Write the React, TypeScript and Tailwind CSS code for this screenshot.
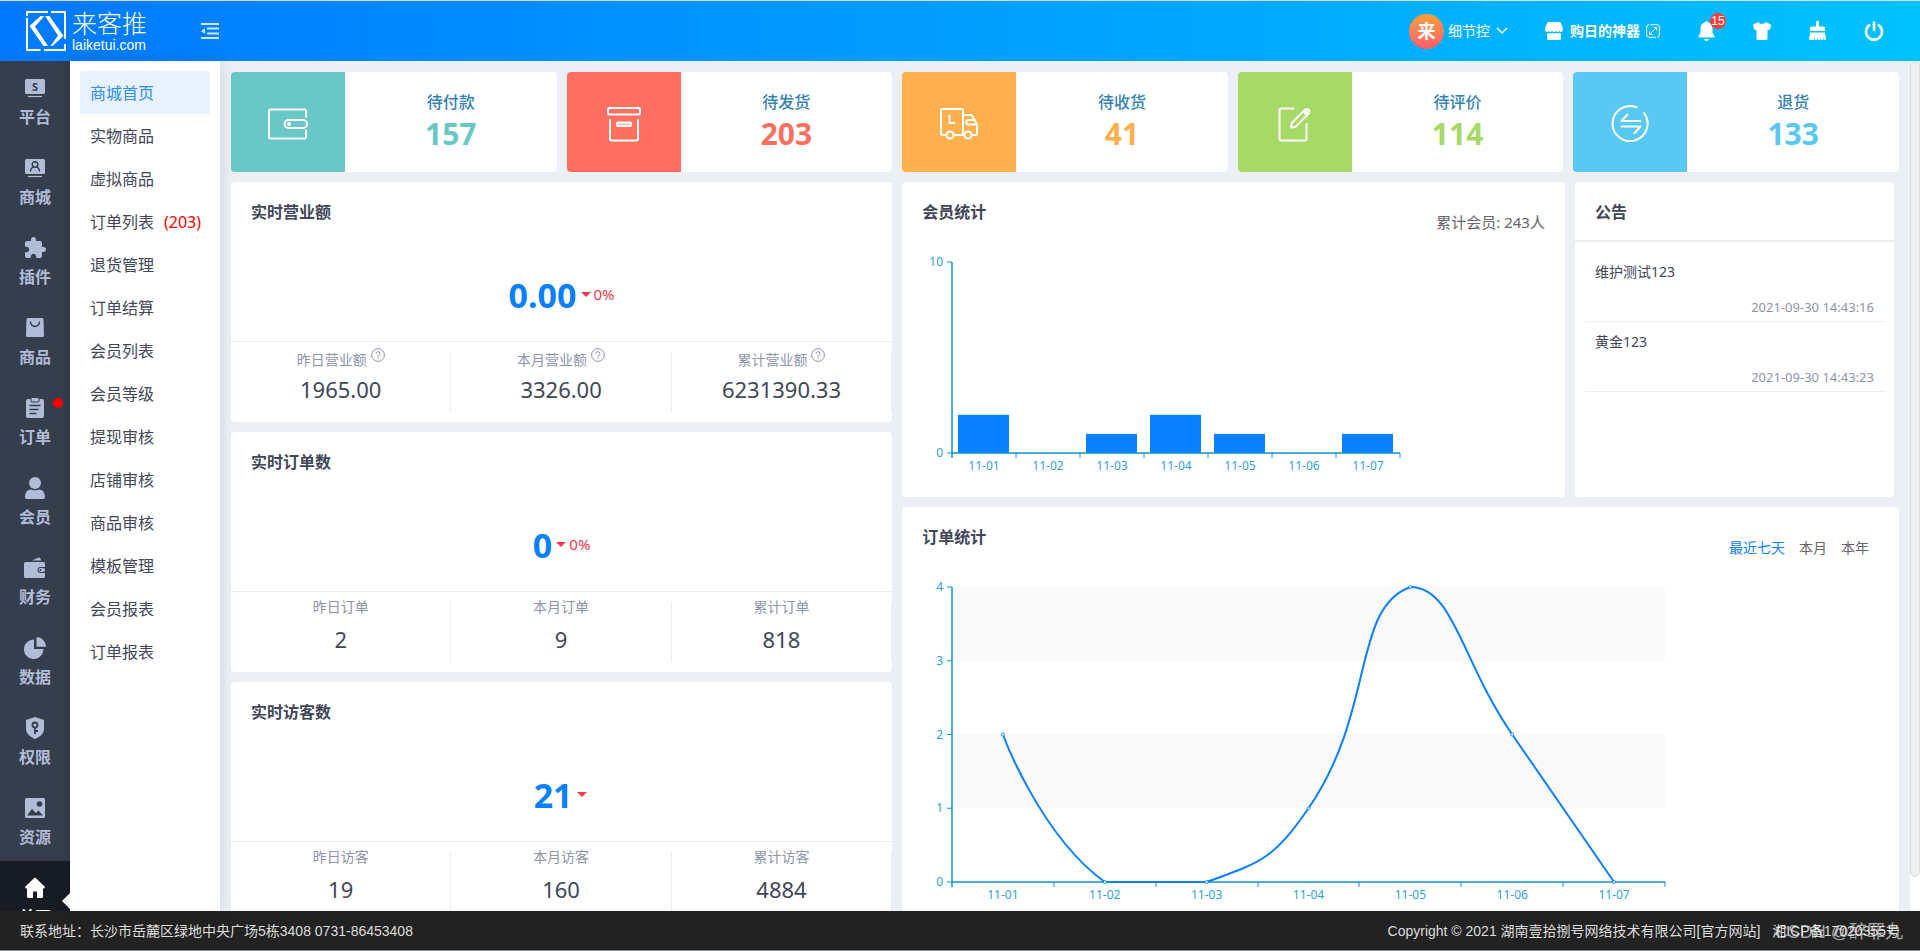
import type { ReactNode } from "react";
import { MdExtension } from "react-icons/md";

const DAYS = ["11-01", "11-02", "11-03", "11-04", "11-05", "11-06", "11-07"];
const MEMBER_COUNTS = [2, 0, 1, 2, 1, 0, 1];
const ORDER_COUNTS = [2, 0, 0, 1, 4, 2, 0];

const RAIL_BG = "#353e4c";

interface RailItem {
  label: string;
  icon: ReactNode;
  dot?: boolean;
  active?: boolean;
}

const railItems: RailItem[] = [
  {
    label: "平台",
    icon: (
      <>
        <rect x="1" y="2" width="20" height="15" rx="1.5" />
        <path d="M4 19.5h14" stroke="currentColor" strokeWidth="1.2" />
        <text x="11" y="13.5" fontSize="11" fontWeight="700" textAnchor="middle" fill={RAIL_BG}>
          S
        </text>
      </>
    ),
  },
  {
    label: "商城",
    icon: (
      <>
        <rect x="1" y="2" width="20" height="15" rx="1.5" />
        <path d="M4 19.5h14" stroke="currentColor" strokeWidth="1.2" />
        <g fill="none" stroke={RAIL_BG} strokeWidth="1.4">
          <circle cx="11" cy="7.5" r="2.8" />
          <path d="M6.5 14.5c.2-2.6 1.6-4.2 3.2-4.6M15.5 14.5c-.2-2.6-1.6-4.2-3.2-4.6" />
        </g>
      </>
    ),
  },
  { label: "插件", icon: null },
  {
    label: "商品",
    icon: (
      <>
        <path d="M4 1h14a1.5 1.5 0 0 1 1.5 1.5L20 18.5a1.5 1.5 0 0 1-1.5 1.5h-15A1.5 1.5 0 0 1 2 18.5L2.5 2.5A1.5 1.5 0 0 1 4 1z" />
        <path d="M6.5 4.5c0 6.5 9 6.5 9 0" fill="none" stroke={RAIL_BG} strokeWidth="1.5" />
      </>
    ),
  },
  {
    label: "订单",
    dot: true,
    icon: (
      <>
        <rect x="2" y="2" width="18" height="19" rx="2" />
        <rect x="7" y="0.5" width="8" height="4.5" rx="1" stroke={RAIL_BG} strokeWidth="1" />
        <path d="M5.5 8.5h11M5.5 12.5h9M5.5 16.5h7" stroke={RAIL_BG} strokeWidth="1.3" />
      </>
    ),
  },
  {
    label: "会员",
    icon: (
      <>
        <circle cx="11" cy="6" r="6" />
        <path d="M1 20c0-4.5 2.5-7.5 6-7.5 1.5 1 6.5 1 8 0 3.5 0 6 3 6 7.5 0 1.3-.7 2-2 2H3c-1.3 0-2-.7-2-2z" />
      </>
    ),
  },
  {
    label: "财务",
    icon: (
      <>
        <path d="M8 3.500l6-2.7c1.2-.5 2 0 2.5 1l.7 1.7z" />
        <path d="M1.5 5H19.5A1.5 1.5 0 0 1 21 6.5V10H16.5a3 3 0 0 0 0 6H21v3.500a1.5 1.5 0 0 1-1.5 1.5h-18A1.5 1.5 0 0 1 0 19.5v-13A1.5 1.5 0 0 1 1.5 5z" />
        <rect x="14.5" y="11" width="6.5" height="4" rx="2" />
        <circle cx="16.5" cy="13" r="1" fill={RAIL_BG} />
      </>
    ),
  },
  {
    label: "数据",
    icon: (
      <>
        <path d="M10 2.5V12h9.5A9.8 9.8 0 1 1 10 2.5z" />
        <path d="M12.5 0A9.6 9.6 0 0 1 22 9.7h-9.5z" />
      </>
    ),
  },
  {
    label: "权限",
    icon: (
      <>
        <path d="M11 0l9 3v9c0 5-4.5 8-9 10-4.5-2-9-5-9-10V3z" />
        <g fill="none" stroke={RAIL_BG} strokeWidth="1.8">
          <circle cx="11" cy="8" r="2.5" />
          <path d="M11 10.5V17M11 14h3" />
        </g>
      </>
    ),
  },
  {
    label: "资源",
    icon: (
      <>
        <rect x="1" y="1" width="20" height="20" rx="1.5" />
        <circle cx="15.5" cy="7" r="2.8" fill={RAIL_BG} />
        <path d="M3 18.5l5-6.5 4 4 2.5-2.5 4.5 5z" fill={RAIL_BG} />
      </>
    ),
  },
  {
    label: "首页",
    active: true,
    icon: (
      <path d="M11 .8c.5 0 .9.2 1.3.6l8 7.8c1 1 .6 2.3-.8 2.3H19V19.5a1.5 1.5 0 0 1-1.5 1.5H13V14.5H9V21H4.5A1.5 1.5 0 0 1 3 19.5v-8h-.5c-1.4 0-1.8-1.3-.8-2.3l8-7.8c.4-.4.8-.6 1.3-.6z" />
    ),
  },
];

const menuItems = [
  "商城首页",
  "实物商品",
  "虚拟商品",
  "订单列表",
  "退货管理",
  "订单结算",
  "会员列表",
  "会员等级",
  "提现审核",
  "店铺审核",
  "商品审核",
  "模板管理",
  "会员报表",
  "订单报表",
];

const statCards = [
  {
    label: "待付款",
    value: "157",
    bg: "bg-[#69c8c7]",
    text: "text-[#69c8c7]",
    icon: (
      <>
        <path d="M38 15V9a1.5 1.5 0 0 0-1.5-1.5H2.500A1.5 1.5 0 0 0 1 9v26a1.5 1.5 0 0 0 1.5 1.5h34A1.5 1.5 0 0 0 38 35v-6.5" />
        <rect x="16.5" y="18" width="22.5" height="8" rx="4" />
        <circle cx="21" cy="22" r="1" />
      </>
    ),
  },
  {
    label: "待发货",
    value: "203",
    bg: "bg-[#ff6f61]",
    text: "text-[#ff6f61]",
    icon: (
      <>
        <rect x="4" y="6" width="32" height="6.5" rx="1.5" />
        <path d="M6 18v19a1.5 1.5 0 0 0 1.5 1.5h25A1.5 1.5 0 0 0 34 37V18" />
        <rect x="13" y="20.5" width="14" height="3.5" rx="1" fill="#fff" fillOpacity="0.5" />
      </>
    ),
  },
  {
    label: "待收货",
    value: "41",
    bg: "bg-[#ffb04e]",
    text: "text-[#ffb04e]",
    icon: (
      <>
        <path d="M6.5 33H3.5A1.5 1.5 0 0 1 2 31.5V8.5A1.5 1.5 0 0 1 3.5 7h19A1.5 1.5 0 0 1 24 8.5V33M15 33h9.500M24 13h7.5a2 2 0 0 1 1.8 1.1L38 22.5v9a1.5 1.5 0 0 1-1.5 1.5H33" />
        <circle cx="11" cy="33" r="3.5" />
        <circle cx="29" cy="33" r="3.5" />
        <path d="M10.5 13.5v7.5h5M36 18h-6.5a2 2 0 0 0 0 4.5H38" />
      </>
    ),
  },
  {
    label: "待评价",
    value: "114",
    bg: "bg-[#a6d966]",
    text: "text-[#a6d966]",
    icon: (
      <>
        <path d="M18.5 6.5H6A1.5 1.5 0 0 0 4.5 8v29A1.5 1.5 0 0 0 6 38.5h24a1.5 1.5 0 0 0 1.5-1.5V22" />
        <path d="M16 25.5l.8-4.5L30 7.800a2.600 2.600 0 0 1 3.700 3.700L20.500 24.700z" />
        <circle cx="31" cy="10.5" r="1.2" />
      </>
    ),
  },
  {
    label: "退货",
    value: "133",
    bg: "bg-[#59c8f3]",
    text: "text-[#59c8f3]",
    icon: (
      <>
        <path d="M26.5 5.3A17.5 17.5 0 1 0 34 11" />
        <path d="M17.5 12.5l-6 6.5H30.500M11.5 24.5H30.500l-6 6.5" />
      </>
    ),
  },
];

const realtimePanels = [
  {
    title: "实时营业额",
    value: "0.00",
    change: "0%",
    help: true,
    items: [
      ["昨日营业额", "1965.00"],
      ["本月营业额", "3326.00"],
      ["累计营业额", "6231390.33"],
    ],
  },
  {
    title: "实时订单数",
    value: "0",
    change: "0%",
    help: false,
    items: [
      ["昨日订单", "2"],
      ["本月订单", "9"],
      ["累计订单", "818"],
    ],
  },
  {
    title: "实时访客数",
    value: "21",
    change: "",
    help: false,
    items: [
      ["昨日访客", "19"],
      ["本月访客", "160"],
      ["累计访客", "4884"],
    ],
  },
];

const notices = [
  { title: "维护测试123", time: "2021-09-30 14:43:16" },
  { title: "黄金123", time: "2021-09-30 14:43:23" },
];

function Header() {
  return (
    <header className="flex h-[61px] shrink-0 items-center border-t border-[#cfdbe6] bg-linear-to-r from-[#0078ff] to-[#00c2ff] text-white">
      <a href="#home" className="ml-[26px] flex items-center gap-[6px]">
        <svg width="40" height="40" viewBox="0 0 40 40" fill="none" stroke="#fff" strokeWidth="2">
          <path d="M1 5V1h21M25 1h14v27M39 33v6H18M14.5 39H1V7" />
          <path d="M14.5 5h4L9 15.5 22 35h-4.5L3.5 15z" fill="#fff" stroke="none" />
          <path d="M19 5h4.5L37.5 25 26.5 35h-2L32 24.5z" fill="#fff" stroke="none" />
        </svg>
        <span className="flex flex-col">
          <span className="text-[25px] leading-7 font-light">来客推</span>
          <span className="font-['Liberation_Sans',sans-serif] text-sm leading-4">laiketui.com</span>
        </span>
      </a>
      <button type="button" aria-label="收起菜单" className="ml-[54px]">
        <svg width="18" height="16" viewBox="0 0 18 16" stroke="#fff" strokeOpacity="0.8" strokeWidth="2">
          <path d="M0 1h18M6 5.5h12M6 10.5h12M0 15h18" />
          <path d="M4 5L0 8l4 3z" fill="#fff" fillOpacity="0.8" stroke="none" />
        </svg>
      </button>

      <div className="ml-auto flex items-center pr-9">
        <button type="button" className="flex items-center text-sm">
          <span className="flex size-[35px] items-center justify-center rounded-full bg-linear-to-b from-[#f8a035] to-[#fb5a6a] text-lg font-bold">
            来
          </span>
          <span className="ml-1">细节控</span>
          <svg className="ml-[6px]" width="12" height="8" viewBox="0 0 12 8" fill="none" stroke="#fff" strokeWidth="1.5">
            <path d="M1 1l5 5 5-5" />
          </svg>
        </button>
        <a href="#shop" className="ml-[37px] flex items-center text-sm font-bold">
          <svg width="18" height="18" viewBox="0 0 18 18" fill="#fff">
            <path d="M3.5 0h11a1.5 1.5 0 0 1 1.4 1L18 6.5v1c0 2.5-2.5 3-3.5 1.5-1 1.5-2.7 1.5-3.5 0-1 1.5-3 1.5-4 0-.8 1.5-2.5 1.5-3.5 0C2.5 10.5 0 10 0 7.500v-1L2.100 1A1.5 1.5 0 0 1 3.5 0z" />
            <path d="M2 11.5c1 0 1.5-.3 2-.7 1 .9 2.5.9 3.2 0 1 .9 2.8.9 3.6 0 .9.9 2.4.9 3.200 0 .5.4 1 .7 2 .7v5a1.5 1.5 0 0 1-1.5 1.5h-11A1.5 1.5 0 0 1 2 16.500z" />
          </svg>
          <span className="ml-[7px]">购日的神器</span>
          <svg className="ml-[6px]" width="14" height="14" viewBox="0 0 14 14" fill="none" stroke="#fff">
            <path d="M11 13.3a2.5 2.5 0 0 0 2.3-2.3V3A2.3 2.3 0 0 0 11 .7H4.500M3.5.7A2.5 2.5 0 0 0 .7 3v8A2.3 2.3 0 0 0 3 13.300h7" />
            <path d="M7.5 3.5h3v3M10.5 3.5l-7 7M3.5 7.5v3h3" />
          </svg>
        </a>
        <button type="button" aria-label="消息" className="relative ml-[38px]">
          <svg width="17" height="20" viewBox="0 0 17 20" fill="#fff">
            <path d="M8.5 0c.8 0 1.3.5 1.3 1.3 3 .7 4.7 3 4.7 6.2v4.500l2 3c.4.7.2 1.5-.8 1.5H1.300c-1 0-1.200-.8-.8-1.500l2-3V7.500c0-3.200 1.700-5.500 4.700-6.200C7.200.5 7.700 0 8.500 0zM6 18h5c-.4 1.300-1.300 2-2.500 2S6.400 19.300 6 18z" />
          </svg>
          <span className="absolute -top-2 left-3 flex size-4 items-center justify-center rounded-full bg-[#ff3b3b] font-['Liberation_Sans',sans-serif] text-[12px] leading-none">
            15
          </span>
        </button>
        <button type="button" aria-label="装扮" className="ml-[38px]">
          <svg width="18" height="18" viewBox="0 0 18 18" fill="#fff">
            <path d="M5.5 0c1 2.6 6 2.6 7 0L17 2c.9.4 1.100 1.200.8 2L17 7c-.2.8-.8 1-1.500.8L14.500 7.500V16.500a1.500 1.500 0 0 1-1.500 1.500H5a1.500 1.500 0 0 1-1.500-1.500V7.500L2.500 7.800C1.800 8 1.200 7.800 1 7L.2 4C-.1 3.200.1 2.400 1 2z" />
          </svg>
        </button>
        <button type="button" aria-label="清除缓存" className="ml-[38px]">
          <svg width="17" height="20" viewBox="0 0 17 20" fill="#fff">
            <path d="M7 0h3v5.5h4.500A1.5 1.5 0 0 1 16 7v3H1V7a1.500 1.500 0 0 1 1.500-1.500H7zM1 11.500h15l1 7.500h-2.500l.5-3-1.500 3H11.500l.5-3-1.500 3H8.500L9 16l-1.500 3H5.500L6 16l-1.500 3H0z" />
          </svg>
        </button>
        <button type="button" aria-label="退出" className="ml-[38px]">
          <svg width="20" height="20" viewBox="0 0 20 20" fill="none" stroke="#fff" strokeWidth="2.6" strokeLinecap="round">
            <path d="M10 1.5v7.5M5.300 4.200a8 8 0 1 0 9.400 0" />
          </svg>
        </button>
      </div>
    </header>
  );
}

function Rail() {
  return (
    <nav className="w-[70px] shrink-0 overflow-hidden bg-[#353e4c]">
      {railItems.map((item) => (
        <a
          key={item.label}
          href="#"
          className={`relative flex h-20 flex-col items-center pt-4 text-base leading-6 font-bold ${
            item.active ? "bg-[#171c24] text-white" : "text-[#b1bcd6]"
          }`}
        >
          {item.icon ? (
            <svg width="22" height="22" viewBox="0 0 22 22" fill="currentColor">
              {item.icon}
            </svg>
          ) : (
            <MdExtension size={24} className="-my-px" />
          )}
          <span className="mt-[6px]">{item.label}</span>
          {item.dot && <span className="absolute top-[17px] right-[7px] size-[10px] rounded-full bg-[#ff0000]" />}
          {item.active && (
            <span className="absolute top-8 right-0 border-y-8 border-r-8 border-y-transparent border-r-white" />
          )}
        </a>
      ))}
    </nav>
  );
}

function SubMenu() {
  return (
    <nav className="z-10 w-[150px] shrink-0 bg-white px-[10px] pt-[10px] shadow-[0_0_16px_rgba(0,0,0,0.12)]">
      {menuItems.map((label, i) => (
        <a
          key={label}
          href="#"
          className={`flex h-[43px] items-center rounded-xs px-[10px] text-base whitespace-nowrap ${
            i === 0 ? "bg-[#e9f3ff] text-[#2d8cff]" : "text-[#414658]"
          }`}
        >
          {label}
          {label === "订单列表" && <span className="ml-[10px] text-[#ff0000]">(203)</span>}
        </a>
      ))}
    </nav>
  );
}

function RealtimePanel({ title, value, change, help, items }: (typeof realtimePanels)[number]) {
  return (
    <section className="flex h-60 flex-col rounded-sm bg-white text-[#414658]">
      <h2 className="px-5 pt-[18px] text-base leading-6 font-bold">{title}</h2>
      <div className="flex flex-1 items-center justify-center pt-7 pb-1">
        <span className="text-[34px] leading-10 font-bold text-[#0a80ff]">{value}</span>
        <span className="mr-[3px] ml-1 border-x-[5px] border-t-[5px] border-x-transparent border-t-[#ff3548]" />
        <span className="text-[15px] text-[#e8394b]">{change}</span>
      </div>
      <dl className="grid grid-cols-3 border-t border-[#ebedef] py-[10px]">
        {items.map(([label, amount]) => (
          <div key={label} className="flex h-[60px] flex-col items-center border-r border-[#ebedef]">
            <dt className={`flex h-4 text-sm text-[#8d94a8] ${help ? "leading-4" : "leading-[10px]"}`}>
              {label}
              {help && (
                <svg className="-mt-1 ml-1" width="14" height="14" viewBox="0 0 14 14" fill="none" stroke="currentColor">
                  <circle cx="7" cy="7" r="6.400" />
                  <path d="M5 5.700a2 2 0 1 1 2.800 1.800c-.6.3-.8.5-.8 1.200M7 9.700v1.200" />
                </svg>
              )}
            </dt>
            <dd className="mt-[7px] text-[22px] leading-7">{amount}</dd>
          </div>
        ))}
      </dl>
    </section>
  );
}

function XAxis({ width, y }: { width: number; y: number }) {
  const band = width / DAYS.length;
  return (
    <g>
      <path d={`M0 ${y}H${width}`} stroke="#1090d0" strokeWidth="1.5" />
      {DAYS.map((day, i) => (
        <g key={day}>
          <path d={`M${Math.round(band * (i + 1))} ${y}v5`} stroke="#1090d0" />
          <text x={band * (i + 0.5)} y={y + 17} textAnchor="middle" fontSize="12" fill="#2f9fd6">
            {day}
          </text>
        </g>
      ))}
    </g>
  );
}

function YAxis({ height, ticks }: { height: number; ticks: number[] }) {
  const max = Math.max(...ticks);
  return (
    <g>
      <path d={`M0 0V${height + 5}`} stroke="#1090d0" strokeWidth="1.5" />
      {ticks.map((tick) => {
        const y = height - (tick / max) * height;
        return (
          <g key={tick}>
            <path d={`M-5 ${y}h5`} stroke="#1090d0" />
            <text x="-9" y={y + 4} textAnchor="end" fontSize="12" fill="#2f9fd6">
              {tick}
            </text>
          </g>
        );
      })}
    </g>
  );
}

function MemberChart() {
  const width = 448;
  const height = 191;
  const band = width / DAYS.length;
  return (
    <svg width="480" height="230" viewBox="-24 -10 480 230" role="img" aria-label="会员统计">
      {MEMBER_COUNTS.map((count, i) => {
        const h = (count / 10) * height;
        return <rect key={i} x={band * i + 6} y={height - h} width="51" height={h} fill="#0a80ff" />;
      })}
      <XAxis width={width} y={height} />
      <YAxis height={height} ticks={[0, 10]} />
    </svg>
  );
}

// Catmull-style smoothing, control points are kept inside the plot
function smoothPath(points: number[][], height: number) {
  const clamp = (v: number) => Math.min(height, Math.max(0, v));
  const controls = points.map(([x, y], i) => {
    const prev = points[i - 1];
    const next = points[i + 1];
    if (!prev || !next) return { before: [x, y], after: [x, y] };
    const d0 = Math.hypot(x - prev[0], y - prev[1]);
    const d1 = Math.hypot(x - next[0], y - next[1]);
    const vx = (next[0] - prev[0]) / 2;
    const vy = (next[1] - prev[1]) / 2;
    const r0 = d0 / (d0 + d1);
    const r1 = d1 / (d0 + d1);
    return {
      before: [x - vx * r0, clamp(y - vy * r0)],
      after: [x + vx * r1, clamp(y + vy * r1)],
    };
  });
  return points
    .map(([x, y], i) => (i === 0 ? `M${x} ${y}` : `C${controls[i - 1].after} ${controls[i].before} ${x},${y}`))
    .join("");
}

function OrderChart() {
  const width = 713;
  const height = 295;
  const band = width / DAYS.length;
  const points = ORDER_COUNTS.map((count, i) => [band * (i + 0.5), height - (count / 4) * height]);
  return (
    <svg width="745" height="330" viewBox="-24 -10 745 330" role="img" aria-label="订单统计">
      <rect width={width} height={height / 4} fill="#f9f9f9" />
      <rect y={height / 2} width={width} height={height / 4} fill="#f9f9f9" />
      <XAxis width={width} y={height} />
      <YAxis height={height} ticks={[0, 1, 2, 3, 4]} />
      <path d={smoothPath(points, height)} fill="none" stroke="#0a80ff" strokeWidth="2" />
      {points.map(([x, y]) => (
        <circle key={x} cx={x} cy={y} r="1.5" fill="#fff" stroke="#1a88ff" />
      ))}
    </svg>
  );
}

function Dashboard() {
  return (
    <main className="grid min-w-0 flex-1 grid-cols-5 content-start gap-[10px] overflow-hidden p-[11px]">
      {statCards.map((card) => (
        <a key={card.label} href="#" className="flex h-[100px] overflow-hidden rounded-sm bg-white">
          <span className={`flex w-[35%] items-center justify-center ${card.bg}`}>
            <svg width="40" height="40" viewBox="0 0 40 40" fill="none" stroke="#fff" strokeWidth="2" strokeLinejoin="round" strokeLinecap="round">
              {card.icon}
            </svg>
          </span>
          <span className="flex flex-1 flex-col items-center pt-[18px]">
            <span className="text-base leading-6 font-medium text-[#3582b5]">{card.label}</span>
            <span className={`text-[30px] leading-10 font-bold ${card.text}`}>{card.value}</span>
          </span>
        </a>
      ))}

      <div className="col-span-2 flex flex-col gap-[10px]">
        {realtimePanels.map((panel) => (
          <RealtimePanel key={panel.title} {...panel} />
        ))}
      </div>

      <div className="col-span-3 flex flex-col gap-[10px]">
        <div className="grid grid-cols-[27fr_13fr] gap-[10px] pr-[5px]">
          <section className="h-[315px] rounded-sm bg-white">
            <div className="flex h-[70px] justify-between px-5 pt-[18px]">
              <h2 className="text-base leading-6 font-bold text-[#414658]">会员统计</h2>
              <p className="pt-[10px] text-[15px] leading-6 text-[#666]">累计会员: 243人</p>
            </div>
            <div className="pl-[26px]">
              <MemberChart />
            </div>
          </section>
          <section className="rounded-sm bg-white text-[#414658]">
            <h2 className="h-[60px] border-b-2 border-[#eee] px-5 pt-[18px] text-base leading-6 font-bold">公告</h2>
            <ul className="px-[10px] pt-[10px]">
              {notices.map((notice) => (
                <li key={notice.time} className="flex h-[70px] flex-col justify-between border-b border-[#eee] px-[10px] pt-[10px] pb-1">
                  <a href="#" className="text-sm leading-5">
                    {notice.title}
                  </a>
                  <time className="self-end text-[13px] leading-5 text-[#8d94a8]">{notice.time}</time>
                </li>
              ))}
            </ul>
          </section>
        </div>

        <section className="flex-1 rounded-sm bg-white">
          <div className="flex h-[70px] justify-between pt-[18px] pr-[30px] pl-5">
            <h2 className="text-base leading-6 font-bold text-[#414658]">订单统计</h2>
            <div className="flex items-start gap-[14px] pt-[11px] text-sm leading-6 text-[#666]">
              <button type="button" className="text-[#0a80ff]">
                最近七天
              </button>
              <button type="button">本月</button>
              <button type="button">本年</button>
            </div>
          </div>
          <div className="pl-[26px]">
            <OrderChart />
          </div>
        </section>
      </div>
    </main>
  );
}

function Footer() {
  return (
    <footer className="relative flex h-10 shrink-0 items-center justify-between border-b border-[#7d8b99] bg-[#222] px-5 font-['Liberation_Sans','Noto_Sans_CJK_SC',sans-serif] text-sm text-[#ddd]">
      <span>联系地址：长沙市岳麓区绿地中央广场5栋3408 0731-86453408</span>
      <span className="flex gap-3">
        <a href="#official">Copyright © 2021 湖南壹拾捌号网络技术有限公司[官方网站]</a>
        <a href="#icp">湘ICP备17020355号</a>
      </span>
      <span className="absolute right-[17px] bottom-1 text-lg leading-7 text-white/60">CSDN @醉罪丸</span>
    </footer>
  );
}

export default function App() {
  return (
    <div className="flex h-screen flex-col overflow-hidden bg-[#ecf0f5] font-['Noto_Sans','Noto_Sans_CJK_SC',sans-serif]">
      <Header />
      <div className="flex min-h-0 flex-1">
        <Rail />
        <SubMenu />
        <Dashboard />
        <div className="w-[10px] shrink-0 bg-white">
          <div className="h-[96%] rounded-full border border-[#ddd] bg-[#eee]" />
        </div>
      </div>
      <Footer />
    </div>
  );
}
